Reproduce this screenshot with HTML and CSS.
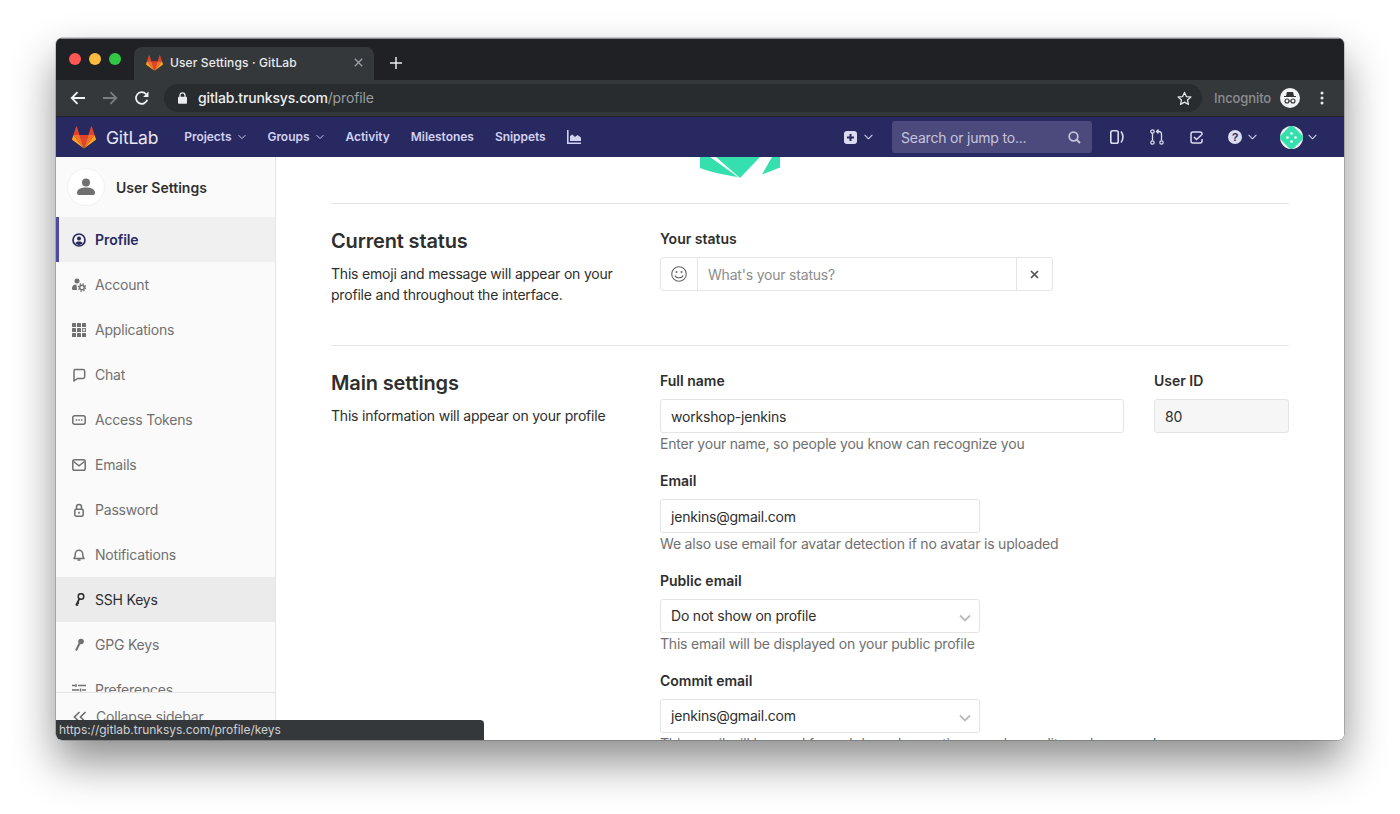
FILE: index.html
```html
<!DOCTYPE html>
<html lang="en">
<head>
<meta charset="utf-8">
<title>User Settings · GitLab</title>
<link rel="stylesheet" href="styles.css">
</head>
<body>
<svg class="defs" width="0" height="0" aria-hidden="true">
  <defs>
    <symbol id="tanuki" viewBox="0 0 36 33">
      <path fill="#e24329" d="M18 33 24.600 12.600H11.400Z"/>
      <path fill="#fc6d26" d="M18 33 11.400 12.600H2.100Z"/>
      <path fill="#fca326" d="M2.100 12.600.1 18.800c-.2.600 0 1.200.5 1.500L18 33Z"/>
      <path fill="#e24329" d="M2.100 12.600h9.300L7.400.5c-.2-.6-1.100-.6-1.300 0Z"/>
      <path fill="#fc6d26" d="M18 33 24.600 12.600h9.300Z"/>
      <path fill="#fca326" d="M33.900 12.600l2 6.200c.2.600 0 1.200-.5 1.500L18 33Z"/>
      <path fill="#e24329" d="M33.900 12.600h-9.300L28.600.5c.2-.6 1.100-.6 1.300 0Z"/>
    </symbol>
    <symbol id="chev" viewBox="0 0 10 6">
      <path d="M1 1l4 4 4-4" fill="none" stroke="currentColor" stroke-width="1.200" stroke-linecap="round" stroke-linejoin="round"/>
    </symbol>
    <clipPath id="avatar-clip"><circle cx="11.500" cy="11.500" r="11.500"/></clipPath>
  </defs>
</svg>

<div class="window">
  <div class="tabstrip">
    <div class="lights">
      <span class="light red"></span><span class="light yellow"></span><span class="light green"></span>
    </div>
    <div class="tab">
      <svg class="tab-logo" width="17" height="16"><use href="#tanuki"/></svg>
      <span class="tab-title">User Settings · GitLab</span>
      <svg class="tab-close" width="9" height="9" viewBox="0 0 9 9"><path d="M.8.8l7.400 7.400M8.200.8.8 8.200" stroke="#9aa0a6" stroke-width="1.300"/></svg>
    </div>
    <svg class="newtab" width="12" height="12" viewBox="0 0 12 12"><path d="M6 0v12M0 6h12" stroke="#e8eaed" stroke-width="1.500"/></svg>
  </div>

  <div class="toolbar">
    <svg class="tb-icon" width="16" height="14" viewBox="0 0 16 14"><path d="M15 7H2M7.500 1.200 1.700 7l5.800 5.800" fill="none" stroke="#f1f3f4" stroke-width="1.800"/></svg>
    <svg class="tb-icon" width="16" height="14" viewBox="0 0 16 14"><path d="M1 7h13M8.500 1.200 14.300 7l-5.800 5.800" fill="none" stroke="#7b7e81" stroke-width="1.800"/></svg>
    <svg class="tb-icon" width="16" height="16" viewBox="0 0 16 16"><path d="M13.300 9.800A5.800 5.800 0 1 1 12 4l1.500 1.500" fill="none" stroke="#f1f3f4" stroke-width="1.700"/><path d="M14.500 1.500v5.400H9.100Z" fill="#f1f3f4"/></svg>
    <div class="omnibox">
      <svg width="9" height="12" viewBox="0 0 9 12"><path d="M2 5V3.300a2.500 2.500 0 0 1 5 0V5" fill="none" stroke="#e8eaed" stroke-width="1.300"/><rect y="4.800" width="9" height="7" rx="1" fill="#e8eaed"/></svg>
      <span class="url"><b>gitlab.trunksys.com</b><i>/profile</i></span>
      <svg class="star" width="15" height="15" viewBox="0 0 16 16"><path d="M8 1.500l2 4.400 4.800.5-3.600 3.200 1 4.700L8 11.900l-4.200 2.400 1-4.700L1.200 6.400 6 5.900Z" fill="none" stroke="#dfe1e3" stroke-width="1.400" stroke-linejoin="round"/></svg>
    </div>
    <span class="incognito">Incognito</span>
    <svg class="inc-icon" width="20" height="20" viewBox="0 0 20 20"><circle cx="10" cy="10" r="10" fill="#f1f3f4"/><path d="M6 8l1-4h6l1 4h2v1H4V8Z" fill="#303336"/><circle cx="7" cy="13" r="2" fill="none" stroke="#303336" stroke-width="1.100"/><circle cx="13" cy="13" r="2" fill="none" stroke="#303336" stroke-width="1.100"/><path d="M9 13h2" stroke="#303336"/></svg>
    <svg class="kebab" width="4" height="14" viewBox="0 0 4 14"><circle cx="2" cy="2" r="1.500" fill="#e8eaed"/><circle cx="2" cy="7" r="1.500" fill="#e8eaed"/><circle cx="2" cy="12" r="1.500" fill="#e8eaed"/></svg>
  </div>

  <nav class="navbar">
    <svg class="brand-logo" width="24" height="23"><use href="#tanuki"/></svg>
    <span class="brand">GitLab</span>
    <ul class="nav-links">
      <li>Projects<svg class="chev" width="8" height="6"><use href="#chev"/></svg></li>
      <li>Groups<svg class="chev" width="8" height="6"><use href="#chev"/></svg></li>
      <li>Activity</li>
      <li>Milestones</li>
      <li>Snippets</li>
      <li><svg width="14" height="14" viewBox="0 0 14 14"><path d="M.8 0v13.200H14" fill="none" stroke="currentColor" stroke-width="1.600"/><path d="M3 11V6l2.500-1.500L8 7l2.500-2L14 7.500V11Z" fill="currentColor"/></svg></li>
    </ul>
    <div class="nav-right">
      <span class="nav-plus">
        <svg width="13" height="13" viewBox="0 0 13 13"><rect width="13" height="13" rx="3" fill="#dcdcf0"/><path d="M6.500 3v7M3 6.500h7" stroke="#292961" stroke-width="2"/></svg>
        <svg class="chev" width="9" height="6"><use href="#chev"/></svg>
      </span>
      <div class="search">
        <span>Search or jump to...</span>
        <svg width="13" height="13" viewBox="0 0 13 13"><circle cx="5.500" cy="5.500" r="4.300" fill="none" stroke="#c2c2d8" stroke-width="1.800"/><path d="M8.700 8.700 12 12" stroke="#c2c2d8" stroke-width="2"/></svg>
      </div>
      <svg class="nav-i first" width="14" height="14" viewBox="0 0 14 14"><rect x=".8" y=".8" width="7.400" height="12.400" rx="1.800" fill="none" stroke="#dcdcf0" stroke-width="1.600"/><path d="M11 1.500c2.600 3 2.600 8 0 11" fill="none" stroke="#dcdcf0" stroke-width="1.600"/></svg>
      <svg class="nav-i" width="14" height="16" viewBox="0 0 14 16"><circle cx="2.500" cy="2.500" r="1.700" fill="none" stroke="#dcdcf0" stroke-width="1.200"/><circle cx="2.500" cy="13.500" r="1.700" fill="none" stroke="#dcdcf0" stroke-width="1.200"/><circle cx="11.500" cy="13.500" r="1.700" fill="none" stroke="#dcdcf0" stroke-width="1.200"/><path d="M2.500 4.500v7M11.500 11.500V5c0-1.500-1-2.500-2.500-2.500H7M8.500 .5l-2 2 2 2" fill="none" stroke="#dcdcf0" stroke-width="1.300"/></svg>
      <svg class="nav-i" width="13" height="13" viewBox="0 0 13 13"><path d="M12 4V3c0-1.200-.8-2-2-2H3C1.800 1 1 1.800 1 3v7c0 1.200.8 2 2 2h7c1.200 0 2-.8 2-2V8" fill="none" stroke="#dcdcf0" stroke-width="1.500"/><path d="M4 6l2.500 2.500L11.500 4" fill="none" stroke="#dcdcf0" stroke-width="1.600"/></svg>
      <span class="nav-help">
        <svg width="14" height="14" viewBox="0 0 14 14"><circle cx="7" cy="7" r="7" fill="#dcdcf0"/><text x="7" y="11" class="help-mark">?</text></svg>
        <svg class="chev" width="9" height="6"><use href="#chev"/></svg>
      </span>
      <span class="nav-avatar">
        <svg width="23" height="23" viewBox="0 0 23 23"><circle cx="11.500" cy="11.500" r="11.500" fill="#f4f4f4"/><path clip-path="url(#avatar-clip)" d="M11.500 -1.500 24.500 11.500 11.500 24.500 -1.500 11.500Z" fill="#35e0ae"/><circle cx="7.500" cy="11.500" r="1.300" fill="#fff"/><circle cx="15.500" cy="11.500" r="1.300" fill="#fff"/><circle cx="11.500" cy="7.500" r="1.300" fill="#fff"/><circle cx="11.500" cy="15.500" r="1.300" fill="#fff"/></svg>
        <svg class="chev" width="9" height="6"><use href="#chev"/></svg>
      </span>
    </div>
  </nav>

  <div class="main">
    <aside class="sidebar">
      <div class="side-head">
        <span class="side-avatar">
          <svg width="18" height="18" viewBox="0 0 18 18"><circle cx="9" cy="4.500" r="4" fill="#707070"/><path d="M0 15c0-4 4-5.500 9-5.500s9 1.500 9 5.500c0 1.500-1 2-2 2H2c-1 0-2-.5-2-2Z" fill="#707070"/></svg>
        </span>
        <span class="side-title">User Settings</span>
      </div>
      <ul class="side-list">
        <li class="side-item active"><svg width="14" height="14" viewBox="0 0 14 14"><circle cx="7" cy="7" r="6" fill="none" stroke="currentColor" stroke-width="1.700"/><circle cx="7" cy="5.500" r="2" fill="currentColor"/><path d="M3.300 10.500c.5-1.500 2-2 3.700-2s3.200.5 3.700 2L7 12.300Z" fill="currentColor"/></svg>Profile</li>
        <li class="side-item"><svg width="14" height="14" viewBox="0 0 14 14"><circle cx="5" cy="3" r="2.500" fill="currentColor"/><path d="M0 10c0-2.500 2-3.500 4.500-3.500L5 12H1c-.7 0-1-.5-1-2Z" fill="currentColor"/><circle cx="10" cy="9.500" r="2.300" fill="none" stroke="currentColor" stroke-width="1.500"/><circle cx="10" cy="9.500" r="3.700" fill="none" stroke="currentColor" stroke-width="1.200" stroke-dasharray="1.500 1.400"/></svg>Account</li>
        <li class="side-item"><svg width="14" height="14" viewBox="0 0 14 14" fill="currentColor"><rect width="4" height="4" rx=".6"/><rect x="5" width="4" height="4" rx=".6"/><rect x="10" width="4" height="4" rx=".6"/><rect y="5" width="4" height="4" rx=".6"/><rect x="5" y="5" width="4" height="4" rx=".6"/><rect x="10.600" y="5.600" width="2.800" height="2.800" fill="none" stroke="currentColor"/><rect y="10" width="4" height="4" rx=".6"/><rect x="5" y="10" width="4" height="4" rx=".6"/><rect x="10" y="10" width="4" height="4" rx=".6"/></svg>Applications</li>
        <li class="side-item"><svg width="14" height="14" viewBox="0 0 14 14"><path d="M3 1.500h8c1 0 1.700.7 1.700 1.700v5.600c0 1-.7 1.700-1.700 1.700H5.500L2 13V3.200c0-1 .5-1.700 1-1.700Z" fill="none" stroke="currentColor" stroke-width="1.500" stroke-linejoin="round"/></svg>Chat</li>
        <li class="side-item"><svg width="14" height="14" viewBox="0 0 14 14"><rect x=".8" y="2.800" width="12.400" height="8.400" rx="2" fill="none" stroke="currentColor" stroke-width="1.500"/><path d="M3.700 7h1.500M6.300 7h1.500M8.900 7h1.500" stroke="currentColor" stroke-width="1.500"/></svg>Access Tokens</li>
        <li class="side-item"><svg width="14" height="14" viewBox="0 0 14 14"><rect x=".8" y="1.800" width="12.400" height="10.400" rx="1.800" fill="none" stroke="currentColor" stroke-width="1.500"/><path d="M1.500 3.500 7 7.800l5.500-4.300" fill="none" stroke="currentColor" stroke-width="1.500"/></svg>Emails</li>
        <li class="side-item"><svg width="14" height="14" viewBox="0 0 14 14"><path d="M4.500 6V4a2.500 2.500 0 0 1 5 0v2" fill="none" stroke="currentColor" stroke-width="1.500"/><rect x="2.800" y="6.300" width="8.400" height="6.900" rx="1.500" fill="none" stroke="currentColor" stroke-width="1.500"/><rect x="6.200" y="8.800" width="1.600" height="1.900" fill="currentColor"/></svg>Password</li>
        <li class="side-item"><svg width="14" height="14" viewBox="0 0 14 14"><path d="M2 10.500c1-1 1.300-2.500 1.300-4.500a3.700 3.700 0 0 1 7.400 0c0 2 .3 3.500 1.300 4.500Z" fill="none" stroke="currentColor" stroke-width="1.500" stroke-linejoin="round"/><path d="M5.500 12h3" stroke="currentColor" stroke-width="1.600"/></svg>Notifications</li>
        <li class="side-item hover"><svg width="14" height="14" viewBox="0 0 14 14"><circle cx="9" cy="3.500" r="2.800" fill="none" stroke="currentColor" stroke-width="1.500"/><path d="M7.500 5.500 4 12.500M4.300 11.800l2 .5M5.300 9.800l1.700.4" fill="none" stroke="currentColor" stroke-width="1.700"/></svg>SSH Keys</li>
        <li class="side-item"><svg width="14" height="14" viewBox="0 0 14 14"><circle cx="9" cy="3.500" r="2.800" fill="currentColor"/><path d="M7.500 5.500 4 12.500" stroke="currentColor" stroke-width="1.900"/></svg>GPG Keys</li>
        <li class="side-item"><svg width="14" height="14" viewBox="0 0 14 14"><path d="M0 2.500h3M6 2.500h8M0 7h7M10 7h4M0 11.500h2M5 11.500h9M4 1v3M8.500 5.500v3M3.500 10v3" fill="none" stroke="currentColor" stroke-width="1.500"/></svg>Preferences</li>
      </ul>
      <div class="collapse">
        <svg width="14" height="12" viewBox="0 0 14 12"><path d="M6.500 1 1.500 6l5 5M12.500 1l-5 5 5 5" fill="none" stroke="currentColor" stroke-width="1.700"/></svg>
        <span>Collapse sidebar</span>
      </div>
    </aside>

    <div class="content">
      <div class="avatar-row">
        <svg class="big-avatar" width="80" height="21" viewBox="0 0 80 21"><path d="M0 0H10L38 20C24 18 10 15 0 11Z" fill="#35e0ae"/><path d="M16 0H60L40 21Z" fill="#35e0ae"/><path d="M72 0H80V10.500L62 17.500Z" fill="#35e0ae"/></svg>
      </div>
      <hr class="rule">
      <section class="row status-row">
        <div class="intro">
          <h4>Current status</h4>
          <p>This emoji and message will appear on your profile and throughout the interface.</p>
        </div>
        <div class="fields">
          <div class="field-label">Your status</div>
          <div class="status-input">
            <span class="addon-l"><svg width="16" height="16" viewBox="0 0 16 16"><circle cx="8" cy="8" r="7.300" fill="none" stroke="#666" stroke-width="1.100"/><circle cx="5.500" cy="6" r="1" fill="#666"/><circle cx="10.500" cy="6" r="1" fill="#666"/><path d="M4 9.500c1 3 7 3 8 0" fill="none" stroke="#666" stroke-width="1.100"/></svg></span>
            <span class="status-text">What's your status?</span>
            <span class="addon-r"><svg width="9" height="9" viewBox="0 0 9 9"><path d="M1 1l7 7M8 1 1 8" stroke="#555" stroke-width="1.700"/></svg></span>
          </div>
        </div>
      </section>
      <hr class="rule">
      <section class="row main-row">
        <div class="intro">
          <h4>Main settings</h4>
          <p>This information will appear on your profile</p>
        </div>
        <div class="fields">
          <div class="name-line">
            <div class="group grow">
              <div class="field-label">Full name</div>
              <div class="input">workshop-jenkins</div>
              <div class="help">Enter your name, so people you know can recognize you</div>
            </div>
            <div class="group uid">
              <div class="field-label">User ID</div>
              <div class="input readonly">80</div>
            </div>
          </div>
          <div class="group narrow">
            <div class="field-label">Email</div>
            <div class="input">jenkins@gmail.com</div>
            <div class="help nowrap">We also use email for avatar detection if no avatar is uploaded</div>
          </div>
          <div class="group narrow">
            <div class="field-label">Public email</div>
            <div class="input select"><span>Do not show on profile</span><svg width="12" height="8" viewBox="0 0 12 8"><path d="M1 1.500 6 6.500l5-5" fill="none" stroke="#bbb" stroke-width="1.800"/></svg></div>
            <div class="help nowrap">This email will be displayed on your public profile</div>
          </div>
          <div class="group narrow">
            <div class="field-label">Commit email</div>
            <div class="input select"><span>jenkins@gmail.com</span><svg width="12" height="8" viewBox="0 0 12 8"><path d="M1 1.500 6 6.500l5-5" fill="none" stroke="#bbb" stroke-width="1.800"/></svg></div>
            <div class="help nowrap">This email will be used for web based operations, such as edits and merges. <a>Learn more</a></div>
          </div>
        </div>
      </section>
    </div>
    <div class="statusbar">https://gitlab.trunksys.com/profile/keys</div>
  </div>
</div>
</body>
</html>
```

FILE: styles.css
```css
* { box-sizing: border-box; }
html, body { margin: 0; height: 100%; }
body {
  background: #fff;
  padding: 38px 56px 74px;
  font-family: Inter, "Noto Sans", "Liberation Sans", sans-serif;
  font-size: 14px;
  letter-spacing: -.2px;
  color: #2e2e2e;
  overflow: hidden;
}
.defs { position: absolute; }
.window {
  height: 702px;
  border-radius: 6px;
  display: flex;
  flex-direction: column;
  overflow: hidden;
  background: #fff;
  box-shadow: 0 0 0 .5px rgba(0,0,0,.35), 0 22px 44px rgba(0,0,0,.45);
}
svg { display: block; flex: none; }

/* browser chrome */
.tabstrip {
  height: 42px;
  flex: none;
  background: #202124;
  display: flex;
  align-items: flex-end;
  border-top: 1px solid #8d8e90;
}
.lights { display: flex; gap: 8px; align-self: flex-start; padding: 14px 0 0 13px; width: 78px; }
.light { width: 12px; height: 12px; border-radius: 50%; }
.red { background: #fc5753; }
.yellow { background: #fdbc40; }
.green { background: #33c748; }
.tab {
  width: 240px;
  height: 33px;
  background: #35383b;
  border-radius: 8px 8px 0 0;
  display: flex;
  align-items: center;
  padding: 0 11px 2px 12px;
  color: #e8eaed;
  font-size: 12px;
  font-weight: 500;
  letter-spacing: .12px;
}
.tab-title { margin-left: 7px; flex: 1; }
.newtab { margin: 0 0 11px 16px; }
.toolbar {
  height: 37px;
  flex: none;
  background: #35383b;
  border-bottom: 1px solid #222326;
  display: flex;
  align-items: center;
  padding-left: 14px;
}
.tb-icon { margin-right: 16px; }
.omnibox {
  width: 1038px;
  height: 28px;
  margin-left: -2px;
  background: #292c2e;
  border-radius: 14px;
  display: flex;
  align-items: center;
  padding: 0 10px 0 14px;
}
.url { margin-left: 11px; padding-bottom: 1px; font-size: 14px; flex: 1; font-weight: 500; color: #eceef0; letter-spacing: -.15px; }
.url b { font-weight: 500; }
.url i { font-style: normal; color: #9a9da0; font-weight: 400; }
.incognito { margin-left: 12px; color: #8b8e91; font-size: 13px; font-weight: 500; letter-spacing: -.1px; }
.inc-icon { margin-left: 9px; }
.kebab { margin-left: 20px; }

/* gitlab navbar */
.navbar {
  height: 40px;
  flex: none;
  background: #292961;
  display: flex;
  align-items: center;
  padding-left: 16px;
  color: #d1d1f0;
}
.brand { margin-left: 10px; font-size: 17.500px; font-weight: 400; color: #e6e6f4; letter-spacing: -.2px; }
.nav-links {
  list-style: none;
  margin: 0 0 0 26px;
  padding: 0 0 1px;
  display: flex;
  align-items: center;
  gap: 21px;
  font-size: 12px;
  font-weight: 600;
  letter-spacing: -.04px;
}
.nav-links li { display: flex; align-items: center; }
.nav-links .chev { margin-left: 7px; }
.chev { margin-left: 5px; color: #d1d1f0; }
.nav-right { margin-left: auto; display: flex; align-items: center; padding-right: 27px; }
.nav-plus, .nav-help, .nav-avatar { display: flex; align-items: center; }
.nav-plus .chev { margin-left: 7px; }
.nav-help .chev { margin-left: 6px; }
.search {
  width: 200px;
  height: 32px;
  margin-left: 19px;
  background: #4c4a7d;
  border-radius: 3px;
  display: flex;
  align-items: center;
  justify-content: space-between;
  padding: 0 11px 0 9px;
  font-size: 14px;
  color: #c5c5dc;
}
.nav-i { margin-left: 26px; }
.nav-i.first { margin-left: 18px; }
.nav-help { margin-left: 25px; }
.nav-avatar { margin-left: 23px; }
.help-mark { font: 700 11px "Liberation Sans", sans-serif; fill: #292961; text-anchor: middle; }

/* page body */
.main { flex: 1; min-height: 0; display: flex; position: relative; overflow: hidden; }
.sidebar {
  width: 220px;
  flex: none;
  background: #fafafa;
  border-right: 1px solid #e5e5e5;
  display: flex;
  flex-direction: column;
  overflow: hidden;
  color: #707070;
}
.side-head { height: 60px; flex: none; display: flex; align-items: center; padding-left: 11px; }
.side-avatar {
  width: 38px;
  height: 38px;
  border-radius: 50%;
  background: #fff;
  border: 1px solid #f1f1f1;
  display: flex;
  align-items: center;
  justify-content: center;
}
.side-title { margin-left: 11px; font-weight: 600; color: #303030; letter-spacing: 0; }
.side-list { list-style: none; margin: 0; padding: 0; height: 475px; flex: none; overflow: hidden; }
.side-item {
  height: 45px;
  display: flex;
  align-items: center;
  gap: 9px;
  padding-left: 16px;
  color: #707070;
}
.side-item svg { color: #707070; }
.side-item.active {
  background: #f0f0f0;
  border-left: 3px solid #4b4ba3;
  padding-left: 13px;
  color: #292961;
  font-weight: 600;
  letter-spacing: -.05px;
}
.side-item.active svg { color: #292961; }
.side-item.hover { background: #ebebeb; color: #2e2e2e; }
.side-item.hover svg { color: #2e2e2e; }
.collapse {
  height: 48px;
  flex: none;
  background: #fafafa;
  border-top: 1px solid #e5e5e5;
  display: flex;
  align-items: center;
  gap: 9px;
  padding: 0 0 0 17px;
  color: #707070;
}
.content { flex: 1; min-width: 0; padding: 0 55px; overflow: hidden; background: #fff; }
.avatar-row { display: flex; padding-left: 369px; height: 46px; }
.rule { margin: 0; border: 0; border-top: 1px solid #e5e5e5; }
.row { display: flex; }
.status-row { height: 141px; padding-top: 25px; }
.main-row { padding-top: 25px; }
.intro { width: 329px; flex: none; padding-right: 30px; }
.intro h4 { margin: 0 0 10px; height: 24px; line-height: 24px; font-size: 20px; font-weight: 600; color: #2e2e2e; letter-spacing: -.15px; }
.intro p { margin: 0; font-size: 14px; line-height: 21px; color: #2e2e2e; }
.fields { flex: 1; min-width: 0; margin-top: -1px; }
.field-label { height: 21px; line-height: 21px; margin-bottom: 8px; font-weight: 600; color: #2e2e2e; letter-spacing: 0; }
.status-input {
  width: 393px;
  height: 34px;
  border: 1px solid #e5e5e5;
  border-radius: 3px;
  display: flex;
  align-items: center;
}
.addon-l, .addon-r { height: 100%; display: flex; align-items: center; justify-content: center; flex: none; }
.addon-l { width: 37px; border-right: 1px solid #e5e5e5; }
.addon-r { width: 36px; border-left: 1px solid #e5e5e5; }
.status-text { flex: 1; padding-left: 10px; color: #8c8c8c; }
.name-line { display: flex; gap: 30px; }
.grow { flex: 1; min-width: 0; }
.uid { width: 135px; flex: none; }
.group { height: 100px; }
.narrow { width: 320px; }
.input {
  height: 34px;
  border: 1px solid #e5e5e5;
  border-radius: 3px;
  display: flex;
  align-items: center;
  padding: 0 11px 0 10px;
  color: #2e2e2e;
  background: #fff;
}
.readonly { background: #f6f6f6; }
.select { justify-content: space-between; padding-right: 8px; }
.select span { margin-bottom: 2px; }
.select svg { margin-top: 4px; }
.help { margin-top: 0; height: 21px; line-height: 21px; color: #707070; }
.nowrap { white-space: nowrap; }
.help a { color: #1b69b6; }
.statusbar {
  position: absolute;
  left: 0;
  bottom: 0;
  width: 428px;
  height: 20px;
  padding-left: 3px;
  background: #35383b;
  color: #cfd1d3;
  font-size: 12px;
  letter-spacing: -.02px;
  line-height: 20px;
  border-radius: 0 4px 0 0;
}
```
